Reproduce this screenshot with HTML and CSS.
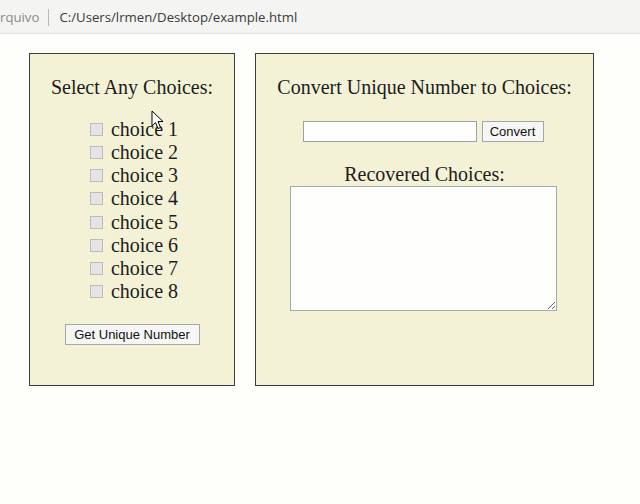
FILE: index.html
```html
<!DOCTYPE html>
<html>
<head>
<meta charset="utf-8">
<link rel="stylesheet" href="styles.css">
</head>
<body>
<div class="addressbar">
  <span class="tab">rquivo</span>
  <span class="sep"></span>
  <span class="path">C:/Users/lrmen/Desktop/example.html</span>
</div>
<div class="page">
  <div class="panel left">
    <div class="title">Select Any Choices:</div>
    <div class="choices">
      <label class="choice"><input type="checkbox" class="box" disabled>choice 1</label>
      <label class="choice"><input type="checkbox" class="box" disabled>choice 2</label>
      <label class="choice"><input type="checkbox" class="box" disabled>choice 3</label>
      <label class="choice"><input type="checkbox" class="box" disabled>choice 4</label>
      <label class="choice"><input type="checkbox" class="box" disabled>choice 5</label>
      <label class="choice"><input type="checkbox" class="box" disabled>choice 6</label>
      <label class="choice"><input type="checkbox" class="box" disabled>choice 7</label>
      <label class="choice"><input type="checkbox" class="box" disabled>choice 8</label>
    </div>
    <div class="btnrow"><button class="btn">Get Unique Number</button></div>
  </div>
  <div class="panel right">
    <div class="title">Convert Unique Number to Choices:</div>
    <div class="convertrow">
      <input type="text" class="numinput">
      <button class="btn">Convert</button>
    </div>
    <div class="title sub">Recovered Choices:</div>
    <div class="arearow"><textarea class="area"></textarea></div>
  </div>
</div>
<svg class="cursor" width="14" height="20" viewBox="0 0 14 20">
  <path d="M1 1 L1 16 L4.5 12.5 L7 18.5 L9.5 17.5 L7 11.5 L12 11.5 Z" fill="#fff" stroke="#000" stroke-width="1" stroke-linejoin="miter"/>
</svg>
</body>
</html>
```

FILE: styles.css
```css
html, body {
  margin: 0;
  padding: 0;
  background: #fefefb;
}
body {
  position: relative;
  width: 640px;
  height: 504px;
  overflow: hidden;
}
.addressbar {
  height: 34px;
  box-sizing: border-box;
  border-bottom: 1px solid #e2e2e2;
  background: #f4f4f2;
  display: flex;
  align-items: center;
  font-family: "Open Sans", "Noto Sans", sans-serif;
  font-size: 13.2px;
  padding-top: 1px;
}
.tab {
  color: #8a8a8a;
  margin-left: 0;
}
.sep {
  width: 1px;
  height: 17px;
  background: #b8b8b8;
  margin: 0 10px 0 9px;
}
.path {
  color: #3a3a3a;
}
.page {
  display: flex;
  gap: 20px;
  padding: 19px 0 0 29px;
  align-items: flex-start;
}
.panel {
  box-sizing: border-box;
  height: 333px;
  border: 1px solid #3c3c3c;
  background: #f3f2d6;
  font-family: "Liberation Serif", "Times New Roman", serif;
  color: #1c1c1c;
  text-align: center;
  padding-top: 22px;
}
.left {
  width: 206px;
}
.right {
  width: 339px;
}
.title {
  font-size: 20px;
  line-height: 23px;
}
.choices {
  display: inline-flex;
  flex-direction: column;
  text-align: left;
  margin-top: 19px;
  font-size: 20px;
  line-height: 23px;
}
.choice {
  display: flex;
  align-items: center;
  height: 23.15px;
  white-space: nowrap;
}
.box {
  appearance: none;
  -webkit-appearance: none;
  width: 13px;
  height: 13px;
  box-sizing: border-box;
  margin: 0 8px 0 4px;
  border: 1px solid #bcbcbc;
  background: #e4e4e4;
}
.btnrow {
  margin-top: 21px;
}
.btn {
  font-family: "Liberation Sans", Arial, sans-serif;
  font-size: 13px;
  color: #111;
  background: #f6f6f4;
  border: 1px solid #a6a6a6;
  border-radius: 0;
  height: 21px;
  padding: 0 7px;
  margin: 0;
}
.left .btn {
  width: 135px;
}
.convertrow {
  display: flex;
  justify-content: center;
  gap: 5px;
  margin-top: 22px;
  padding-right: 3px;
}
.numinput {
  width: 174px;
  height: 21px;
  box-sizing: border-box;
  border: 1px solid #a0a0a0;
  background: #fefefc;
  margin: 0;
  padding: 0 3px;
}
.convertrow .btn {
  width: 62px;
  padding: 0;
}
.sub {
  margin-top: 21px;
}
.arearow {
  display: flex;
  justify-content: center;
  padding-right: 3px;
}
.area {
  width: 267px;
  height: 125px;
  box-sizing: border-box;
  border: 1px solid #a8a8a8;
  background: #fefefd;
  margin: 0;
  padding: 2px;
  resize: both;
}
.cursor {
  position: absolute;
  left: 151px;
  top: 110px;
}
```
